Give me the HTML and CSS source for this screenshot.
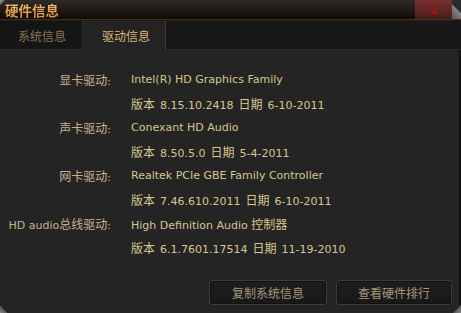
FILE: index.html
```html
<!DOCTYPE html>
<html lang="zh-CN">
<head>
<meta charset="utf-8">
<title>硬件信息</title>
<link rel="stylesheet" href="styles.css">
</head>
<body>
<div class="window">
  <div class="titlebar">
    <span class="title">硬件信息</span>
    <div class="close"><span class="x">x</span></div>
    <div class="fold"></div>
  </div>
  <div class="tabs">
    <div class="tab">系统信息</div>
    <div class="tab active">驱动信息</div>
    <div class="tab-rest"></div>
  </div>
  <div class="content">
    <div class="rows">
      <div class="label"><span class="cjk">显卡驱动</span>:</div><div class="value">Intel(R) HD Graphics Family</div>
      <div class="label"></div><div class="value ver"><span class="cjk">版本</span> 8.15.10.2418 <span class="cjk">日期</span> 6-10-2011</div>
      <div class="label"><span class="cjk">声卡驱动</span>:</div><div class="value">Conexant HD Audio</div>
      <div class="label"></div><div class="value ver"><span class="cjk">版本</span> 8.50.5.0 <span class="cjk">日期</span> 5-4-2011</div>
      <div class="label"><span class="cjk">网卡驱动</span>:</div><div class="value">Realtek PCIe GBE Family Controller</div>
      <div class="label"></div><div class="value ver"><span class="cjk">版本</span> 7.46.610.2011 <span class="cjk">日期</span> 6-10-2011</div>
      <div class="label">HD audio<span class="cjk">总线驱动</span>:</div><div class="value">High Definition Audio <span class="cjk">控制器</span></div>
      <div class="label"></div><div class="value ver"><span class="cjk">版本</span> 6.1.7601.17514 <span class="cjk">日期</span> 11-19-2010</div>
    </div>
    <div class="buttons">
      <div class="btn btn1">复制系统信息</div>
      <div class="btn btn2">查看硬件排行</div>
    </div>
    <div class="grip grip-left"></div>
    <div class="grip grip-right"></div>
  </div>
  <div class="corner-tl"></div>
</div>
</body>
</html>
```
FILE: styles.css
```css
* { box-sizing: border-box; }
html, body { margin: 0; padding: 0; background: #1e1e1e; }
body {
  font-family: "DejaVu Sans", "Noto Sans CJK SC", sans-serif;
  font-size: 12px;
}
.window {
  position: relative;
  width: 461px;
  height: 313px;
  display: flex;
  flex-direction: column;
  overflow: hidden;
  background: #222;
}
.titlebar {
  height: 20px;
  display: flex;
  align-items: stretch;
  background: linear-gradient(#2c2a28, #241c17 45%, #130903);
  border-bottom: 1px solid #3b3322;
  flex: none;
}
.title {
  padding-left: 5px;
  font-family: "Noto Sans CJK SC", sans-serif;
  font-weight: bold;
  font-size: 13.5px;
  line-height: 20px;
  color: #e2a257;
  background: linear-gradient(#f4c878, #d8883a);
  -webkit-background-clip: text;
  background-clip: text;
  -webkit-text-fill-color: transparent;
  flex: 1;
}
.close {
  width: 37px;
  background: linear-gradient(#74302f, #5e2524 60%, #421c19);
  display: flex;
  align-items: center;
  justify-content: center;
}
.x {
  font-family: "DejaVu Sans", sans-serif;
  font-weight: bold;
  font-size: 13px;
  line-height: 13px;
  color: #9c1414;
  margin-top: 1px;
}
.fold {
  width: 9px;
  background: linear-gradient(225deg, #2a2a2a 45%, #8a8282 50%, #5a5050 100%);
}
.tabs {
  height: 30px;
  display: flex;
  flex: none;
  background: #141414;
  border-top: 1px solid #1c1c1c;
}
.tab {
  width: 83px;
  padding-left: 2px;
  font-family: "Noto Sans CJK SC", sans-serif;
  font-size: 12px;
  line-height: 30px;
  text-align: center;
  color: #857555;
  background: #151515;
  border-right: 1px solid #2e2e2e;
  border-bottom: 1px solid #2a2a2a;
}
.tab.active {
  padding-left: 4px;
  color: #d4b676;
  background: #232323;
  border-right: 1px solid #4a3c28;
  border-bottom: none;
}
.tab-rest {
  flex: 1;
  background-color: #161616;
  background-image:
    linear-gradient(45deg, #1a1a1a 25%, transparent 25%, transparent 75%, #1a1a1a 75%),
    linear-gradient(45deg, #1a1a1a 25%, transparent 25%, transparent 75%, #1a1a1a 75%);
  background-size: 2px 2px;
  background-position: 0 0, 1px 1px;
  border-bottom: 1px solid #2a2a2a;
}
.content {
  position: relative;
  flex: 1;
  background-color: #222222;
  background-image:
    linear-gradient(45deg, #262626 25%, transparent 25%, transparent 75%, #262626 75%),
    linear-gradient(45deg, #262626 25%, transparent 25%, transparent 75%, #262626 75%);
  background-size: 2px 2px;
  background-position: 0 0, 1px 1px;
  display: flex;
  flex-direction: column;
  border-right: 2px solid #111;
}
.rows {
  display: grid;
  grid-template-columns: 111px 1fr;
  column-gap: 20px;
  grid-auto-rows: 24px;
  padding-top: 18px;
}
.label, .value {
  line-height: 24px;
  white-space: nowrap;
  font-family: "DejaVu Sans", "Noto Sans CJK SC", sans-serif;
  font-size: 11px;
}
.cjk {
  font-family: "Noto Sans CJK SC", sans-serif;
  font-size: 12px;
}
.label {
  text-align: right;
  color: #c6b189;
}
.value {
  color: #d9c590;
}
.value.ver {
  word-spacing: 1.5px;
}
.buttons {
  margin-top: auto;
  display: flex;
  justify-content: flex-end;
  gap: 9px;
  padding: 0 7px 8px 0;
}
.btn {
  height: 25px;
  line-height: 23px;
  text-align: center;
  font-family: "Noto Sans CJK SC", sans-serif;
  font-size: 12px;
  color: #a6977c;
  background: linear-gradient(#1e1e1e, #181818);
  border: 1px solid #3c3c3c;
  border-radius: 3px;
  box-shadow: inset 0 0 0 1px #111;
}
.btn1 { width: 118px; }
.btn2 { width: 116px; }
.grip {
  position: absolute;
  bottom: 0;
  width: 8px;
  height: 8px;
}
.grip-left {
  left: 0;
  background: linear-gradient(45deg, #8a8a8a 0%, #555 45%, transparent 50%);
}
.grip-right {
  right: -2px;
  width: 9px;
  background: linear-gradient(315deg, #8a8a8a 0%, #555 45%, transparent 50%);
}
.corner-tl {
  position: absolute;
  left: 0;
  top: 0;
  width: 6px;
  height: 6px;
  background: linear-gradient(135deg, #9a9a9a 0%, #666 40%, transparent 50%);
}
```
